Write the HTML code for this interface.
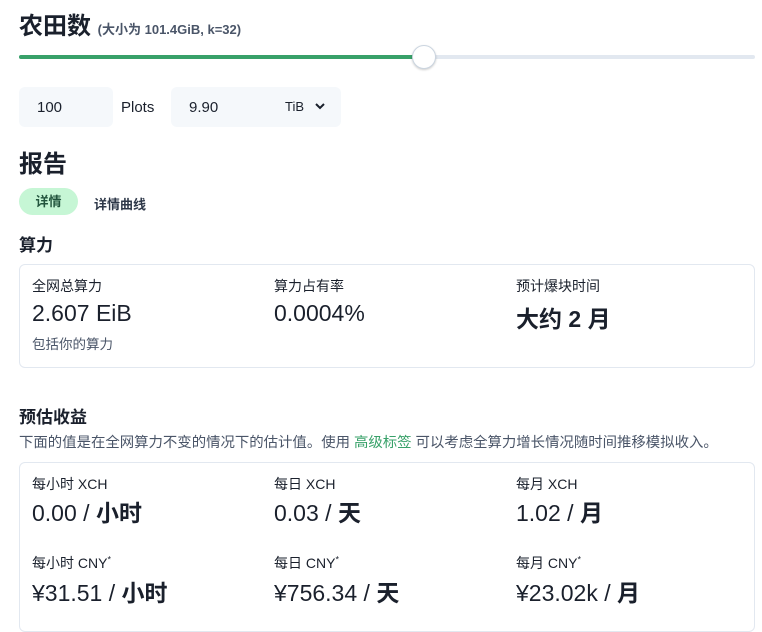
<!DOCTYPE html>
<html><head><meta charset="utf-8"><style>
*{box-sizing:border-box;margin:0;padding:0}
body{width:762px;height:610px;overflow:hidden;background:#fff;font-family:"Liberation Sans","Noto Sans CJK SC",sans-serif;color:#1a202c;position:relative}
.a{position:absolute;white-space:nowrap}
.card{position:absolute;left:19px;width:736px;border:1px solid #e2e8f0;border-radius:6px}
.lab{font-size:14px;color:#1a202c}
.val{font-size:23px}
.b{font-weight:bold}
sup{font-size:9px}
</style></head><body>
<div class="a" style="left:19px;top:6px;font-size:24px;font-weight:bold">农田数 <span style="font-size:13px;color:#4a5568">(大小为 101.4GiB, k=32)</span></div>
<div class="a" style="left:19px;top:55px;width:736px;height:4px;background:#e2e8f0;border-radius:2px"></div>
<div class="a" style="left:19px;top:55px;width:405px;height:4px;background:#38a169;border-radius:2px"></div>
<div class="a" style="left:412px;top:45px;width:24px;height:24px;border-radius:50%;background:#fff;border:1px solid #cbd5e0;box-shadow:0 1px 2px rgba(0,0,0,.2)"></div>
<div class="a" style="left:19px;top:87px;width:94px;height:40px;background:#f5f8fb;border-radius:6px;font-size:15px;padding:12px 0 0 18px">100</div>
<div class="a" style="left:121px;top:99px;font-size:15px">Plots</div>
<div class="a" style="left:171px;top:87px;width:170px;height:40px;background:#f5f8fb;border-radius:6px;font-size:15px;padding:12px 0 0 18px">9.90</div>
<div class="a" style="left:285px;top:99px;font-size:13px">TiB</div>
<svg class="a" style="left:314px;top:101px" width="12" height="10" viewBox="0 0 12 10"><path d="M2 3l4 4 4-4" fill="none" stroke="#1a202c" stroke-width="2"/></svg>
<div class="a" style="left:19px;top:144px;font-size:24px;font-weight:bold">报告</div>
<div class="a" style="left:19px;top:188px;width:59px;height:27px;border-radius:14px;background:#c6f6d5;color:#22543d;font-size:13px;font-weight:bold;text-align:center;line-height:27px">详情</div>
<div class="a" style="left:94px;top:194px;font-size:13px;font-weight:bold;color:#2d3748">详情曲线</div>
<div class="a" style="left:19px;top:231px;font-size:17px;font-weight:bold">算力</div>
<div class="card" style="top:264px;height:104px"></div>
<div class="a lab" style="left:32px;top:276px">全网总算力</div>
<div class="a lab" style="left:274px;top:276px">算力占有率</div>
<div class="a lab" style="left:516px;top:276px">预计爆块时间</div>
<div class="a val" style="left:32px;top:300px">2.607 EiB</div>
<div class="a val" style="left:274px;top:300px">0.0004%</div>
<div class="a val b" style="left:516px;top:300px">大约 2 月</div>
<div class="a" style="left:32px;top:333px;font-size:13.5px;color:#4a5568">包括你的算力</div>
<div class="a" style="left:19px;top:403px;font-size:17px;font-weight:bold">预估收益</div>
<div class="a" style="left:19px;top:431px;font-size:14.4px;color:#4a5568">下面的值是在全网算力不变的情况下的估计值。使用 <span style="color:#38a169">高级标签</span> 可以考虑全算力增长情况随时间推移模拟收入。</div>
<div class="card" style="top:462px;height:170px"></div>
<div class="a lab" style="left:32px;top:474px">每小时 XCH</div>
<div class="a lab" style="left:274px;top:474px">每日 XCH</div>
<div class="a lab" style="left:516px;top:474px">每月 XCH</div>
<div class="a val" style="left:32px;top:494px">0.00 / <b>小时</b></div>
<div class="a val" style="left:274px;top:494px">0.03 / <b>天</b></div>
<div class="a val" style="left:516px;top:494px">1.02 / <b>月</b></div>
<div class="a lab" style="left:32px;top:553px">每小时 CNY<sup>*</sup></div>
<div class="a lab" style="left:274px;top:553px">每日 CNY<sup>*</sup></div>
<div class="a lab" style="left:516px;top:553px">每月 CNY<sup>*</sup></div>
<div class="a val" style="left:32px;top:574px">¥31.51 / <b>小时</b></div>
<div class="a val" style="left:274px;top:574px">¥756.34 / <b>天</b></div>
<div class="a val" style="left:516px;top:574px">¥23.02k / <b>月</b></div>
</body></html>
